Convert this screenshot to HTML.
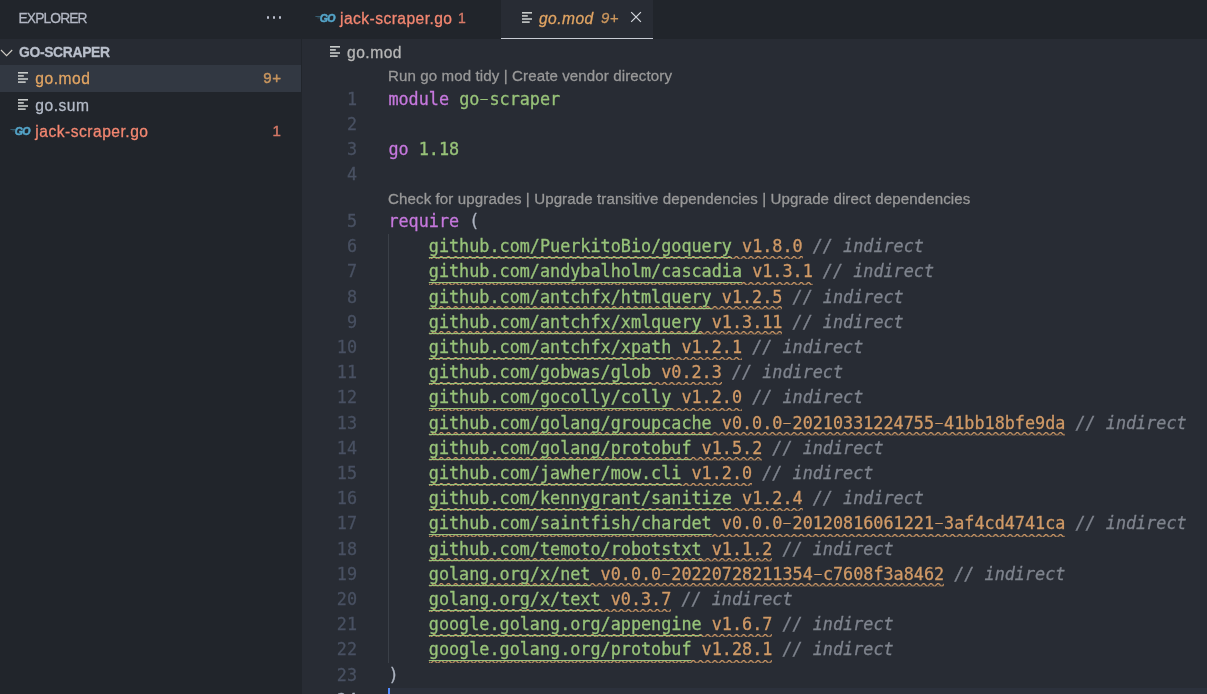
<!DOCTYPE html>
<html lang="en">
<head>
<meta charset="utf-8">
<title>go.mod — go-scraper</title>
<style>
*{box-sizing:border-box;margin:0;padding:0}
html,body{width:1207px;height:694px;overflow:hidden;background:#282c34}
body{position:relative;will-change:transform;-webkit-text-stroke:.28px;font-family:"Liberation Sans",sans-serif;color:#abb2bf;-webkit-font-smoothing:antialiased}
#side{position:absolute;left:0;top:0;width:301px;height:694px;background:#21252b}
#sep{position:absolute;left:301px;top:0;width:1px;height:694px;background:#21252b}
#side .title{position:absolute;left:18.5px;top:0;height:39px;line-height:37px;font-size:13.8px;color:#b3b8c4;letter-spacing:-.87px}
#side .dots{position:absolute;left:266px;top:0;height:39px;width:16px}
#side .dots i{position:absolute;top:16.2px;width:2.4px;height:2.4px;border-radius:50%;background:#bcc1cf}
#sect{position:absolute;left:0;top:39px;width:301px;height:26px;background:#272b33;font-weight:bold;font-size:13.9px;line-height:27.4px;color:#b9bfcb;letter-spacing:-.35px}
#sect span{position:absolute;left:19px;top:0}
#sect svg{position:absolute;left:0;top:8px}
.row{position:absolute;left:0;width:301px;height:26.5px;font-size:15.6px;line-height:28.5px;letter-spacing:.5px}
.row.sel{background:#323842}
.row .nm{position:absolute;left:35.3px;top:0}
.row .bd{position:absolute;right:19.6px;top:0;font-size:15px;letter-spacing:.5px;line-height:26.5px;opacity:.85;-webkit-text-stroke:.45px}
.ico{position:absolute}
.warn{color:#e2a563}.err{color:#f48771}
#tabs{position:absolute;left:302px;top:0;width:905px;height:39px;background:#21252b}
.tab{position:absolute;top:0;height:39px;font-size:15.6px;line-height:37px;letter-spacing:.45px}
#t1{left:0;width:198px}
#t2{left:199px;width:152px;background:#282c34;border-bottom:1px solid #c8ccd4;font-style:italic}
.tab .nm{position:absolute;top:0}
#crumb{position:absolute;left:302px;top:39px;width:905px;height:26px;font-size:15.6px;line-height:28px;color:#b7b7b7;letter-spacing:.5px}
#ed{position:absolute;left:302px;top:65px;width:905px;height:629px;overflow:hidden;font-family:"DejaVu Sans Mono","Liberation Mono",monospace;font-size:16.8px}
.ln{position:absolute;left:0;width:905px;height:25.2px;line-height:25.2px;white-space:pre}
.ln .no{position:absolute;left:0;top:0;width:55px;text-align:right;color:#495162}
.ln .cd{position:absolute;left:86.4px;top:0;height:25.2px;-webkit-text-stroke:.3px}
.ln.g:before{content:"";position:absolute;left:86px;top:0;width:1px;height:100%;background:#3b4048}
.lens{position:absolute;left:0;height:21.6px;line-height:23px;padding-left:86px;font-family:"Liberation Sans",sans-serif;font-size:15.1px;color:#999;white-space:pre;letter-spacing:.1px}
.k{color:#c678dd}.s{color:#98c379}.v{color:#d19a66}.c{color:#7f848e;font-style:italic}.p{color:#abb2bf}
.u{text-decoration:underline;text-decoration-thickness:1px;text-underline-position:under;text-underline-offset:0px}
.sq{position:relative;display:inline-block;height:25.2px;z-index:0}
.wv{position:absolute;left:0;display:block;z-index:-1}
.hy{display:inline-block;transform:translateY(-.6px) scale(1.65,.72)}
.curline .cd{background:#2c313c;width:820px;top:0}
.curline .no{color:#abb2bf}
.cur{display:inline-block;width:2px;height:25.2px;background:#528bff;vertical-align:top}
</style>
</head>
<body>
<svg width="0" height="0" style="position:absolute">
<defs>
<pattern id="wave" x="-0.6" y="0" width="7.2" height="3.6" patternUnits="userSpaceOnUse">
<g transform="scale(1.2)" fill="#d39c67"><polygon points="5.5,0 2.5,3 1.1,3 4.1,0"/><polygon points="4,0 6,2 6,0.6 5.4,0"/><polygon points="0,2 1,3 2.4,3 0,0.6"/></g>
</pattern>
</defs>
</svg>
<div id="side">
  <div class="title">EXPLORER</div>
  <div class="dots"><i style="left:.8px"></i><i style="left:6.8px"></i><i style="left:12.8px"></i></div>
  <div id="sect"><svg width="14" height="12" viewBox="0 0 14 12"><path d="M1 3 L6.6 8.7 L12.2 3" fill="none" stroke="#d2cec6" stroke-width="1.1"/></svg><span>GO-SCRAPER</span></div>
  <div class="row sel" style="top:65px">
    <svg class="ico" style="left:17px;top:6px" width="12" height="14" viewBox="0 0 12 14"><g fill="#c9cccb"><rect x="1" y="1" width="10" height="1.6"/><rect x="1" y="4.1" width="5.8" height="1.6"/><rect x="1" y="7.2" width="10" height="1.6"/><rect x="1" y="10.3" width="7.7" height="1.6"/></g></svg>
    <span class="nm warn">go.mod</span><span class="bd warn">9+</span>
  </div>
  <div class="row" style="top:91.5px">
    <svg class="ico" style="left:17px;top:6px" width="12" height="14" viewBox="0 0 12 14"><g fill="#c9cccb"><rect x="1" y="1" width="10" height="1.6"/><rect x="1" y="4.1" width="5.8" height="1.6"/><rect x="1" y="7.2" width="10" height="1.6"/><rect x="1" y="10.3" width="7.7" height="1.6"/></g></svg>
    <span class="nm" style="color:#b4bbc8">go.sum</span>
  </div>
  <div class="row" style="top:118px">
    <svg class="ico go" style="left:9px;top:8px" width="24" height="12" viewBox="0 0 24 12"><text x="5.7" y="8.9" font-family="Liberation Sans, sans-serif" font-weight="bold" font-style="italic" font-size="10.6" fill="#54a4c8" stroke="#54a4c8" stroke-width=".5" letter-spacing="-.75">GO</text><rect x="1.4" y="3.1" width="4.6" height="0.9" fill="#54a4c8" opacity=".5"/><rect x="3.4" y="4.5" width="2.6" height="0.8" fill="#54a4c8" opacity=".4"/></svg>
    <span class="nm err">jack-scraper.go</span><span class="bd err">1</span>
  </div>
</div>
<div id="sep"></div>
<div id="tabs">
  <div class="tab" id="t1">
    <svg class="ico go" style="left:11.6px;top:13px" width="24" height="12" viewBox="0 0 24 12"><text x="5.7" y="8.9" font-family="Liberation Sans, sans-serif" font-weight="bold" font-style="italic" font-size="10.6" fill="#54a4c8" stroke="#54a4c8" stroke-width=".5" letter-spacing="-.75">GO</text><rect x="1.4" y="3.1" width="4.6" height="0.9" fill="#54a4c8" opacity=".5"/><rect x="3.4" y="4.5" width="2.6" height="0.8" fill="#54a4c8" opacity=".4"/></svg>
    <span class="nm err" style="left:38px">jack-scraper.go</span><span class="nm err" style="left:156px;font-size:14px;opacity:.88">1</span>
  </div>
  <div class="tab" id="t2">
    <svg class="ico" style="left:20px;top:11px" width="12" height="14" viewBox="0 0 12 14"><g fill="#c9cccb"><rect x="1" y="1" width="10" height="1.6"/><rect x="1" y="4.1" width="5.8" height="1.6"/><rect x="1" y="7.2" width="10" height="1.6"/><rect x="1" y="10.3" width="7.7" height="1.6"/></g></svg>
    <span class="nm warn" style="left:38px">go.mod</span><span class="nm warn" style="left:100px;font-size:15px;opacity:.88;line-height:36px">9+</span>
    <svg class="ico" style="left:128.8px;top:11px" width="12" height="12" viewBox="0 0 12 12"><path d="M1.2 1.2 L10.9 10.9 M10.9 1.2 L1.2 10.9" stroke="#d7dae0" stroke-width="1.2" fill="none"/></svg>
  </div>
</div>
<div id="crumb">
  <svg class="ico" style="left:27px;top:6px" width="12" height="14" viewBox="0 0 12 14"><g fill="#c9cccb"><rect x="1" y="1" width="10" height="1.6"/><rect x="1" y="4.1" width="5.8" height="1.6"/><rect x="1" y="7.2" width="10" height="1.6"/><rect x="1" y="10.3" width="7.7" height="1.6"/></g></svg>
  <span style="position:absolute;left:45px;top:0">go.mod</span>
</div>
<div id="ed">
<div class="lens" style="top:0px;line-height:21.6px">Run go mod tidy | Create vendor directory</div>
<div class="ln" style="top:21.6px"><span class="no">1</span><span class="cd"><span class="k">module</span> <span class="s">go<span class="hy">-</span>scraper</span></span></div>
<div class="ln" style="top:46.8px"><span class="no">2</span><span class="cd"></span></div>
<div class="ln" style="top:72px"><span class="no">3</span><span class="cd"><span class="k">go</span> <span class="s">1.18</span></span></div>
<div class="ln" style="top:97.2px"><span class="no">4</span><span class="cd"></span></div>
<div class="lens" style="top:122.4px;line-height:23px">Check for upgrades | Upgrade transitive dependencies | Upgrade direct dependencies</div>
<div class="ln" style="top:144px"><span class="no">5</span><span class="cd"><span class="k">require</span> <span class="p">(</span></span></div>
<div class="ln g" style="top:169.2px"><span class="no">6</span><span class="cd"><span class="ind">    </span><span class="sq"><span class="s u">github.com/PuerkitoBio/goquery</span> <span class="v">v1.8.0</span><svg class="wv" style="top:21.6px" width="100%" height="3.1"><rect width="100%" height="3.1" fill="url(#wave)"/></svg></span> <span class="c">// indirect</span></span></div>
<div class="ln g" style="top:194.4px"><span class="no">7</span><span class="cd"><span class="ind">    </span><span class="sq"><span class="s u">github.com/andybalholm/cascadia</span> <span class="v">v1.3.1</span><svg class="wv" style="top:22.2px" width="100%" height="3.1"><rect width="100%" height="3.1" fill="url(#wave)"/></svg></span> <span class="c">// indirect</span></span></div>
<div class="ln g" style="top:219.6px"><span class="no">8</span><span class="cd"><span class="ind">    </span><span class="sq"><span class="s u">github.com/antchfx/htmlquery</span> <span class="v">v1.2.5</span><svg class="wv" style="top:21.6px" width="100%" height="3.6"><rect width="100%" height="3.6" fill="url(#wave)"/></svg></span> <span class="c">// indirect</span></span></div>
<div class="ln g" style="top:244.8px"><span class="no">9</span><span class="cd"><span class="ind">    </span><span class="sq"><span class="s u">github.com/antchfx/xmlquery</span> <span class="v">v1.3.11</span><svg class="wv" style="top:21.6px" width="100%" height="3.6"><rect width="100%" height="3.6" fill="url(#wave)"/></svg></span> <span class="c">// indirect</span></span></div>
<div class="ln g" style="top:270px"><span class="no">10</span><span class="cd"><span class="ind">    </span><span class="sq"><span class="s u">github.com/antchfx/xpath</span> <span class="v">v1.2.1</span><svg class="wv" style="top:21.6px" width="100%" height="3.6"><rect width="100%" height="3.6" fill="url(#wave)"/></svg></span> <span class="c">// indirect</span></span></div>
<div class="ln g" style="top:295.2px"><span class="no">11</span><span class="cd"><span class="ind">    </span><span class="sq"><span class="s u">github.com/gobwas/glob</span> <span class="v">v0.2.3</span><svg class="wv" style="top:21.6px" width="100%" height="3.1"><rect width="100%" height="3.1" fill="url(#wave)"/></svg></span> <span class="c">// indirect</span></span></div>
<div class="ln g" style="top:320.4px"><span class="no">12</span><span class="cd"><span class="ind">    </span><span class="sq"><span class="s u">github.com/gocolly/colly</span> <span class="v">v1.2.0</span><svg class="wv" style="top:22.2px" width="100%" height="3.1"><rect width="100%" height="3.1" fill="url(#wave)"/></svg></span> <span class="c">// indirect</span></span></div>
<div class="ln g" style="top:345.6px"><span class="no">13</span><span class="cd"><span class="ind">    </span><span class="sq"><span class="s u">github.com/golang/groupcache</span> <span class="v">v0.0.0<span class="hy">-</span>20210331224755<span class="hy">-</span>41bb18bfe9da</span><svg class="wv" style="top:21.6px" width="100%" height="3.6"><rect width="100%" height="3.6" fill="url(#wave)"/></svg></span> <span class="c">// indirect</span></span></div>
<div class="ln g" style="top:370.8px"><span class="no">14</span><span class="cd"><span class="ind">    </span><span class="sq"><span class="s u">github.com/golang/protobuf</span> <span class="v">v1.5.2</span><svg class="wv" style="top:21.6px" width="100%" height="3.6"><rect width="100%" height="3.6" fill="url(#wave)"/></svg></span> <span class="c">// indirect</span></span></div>
<div class="ln g" style="top:396px"><span class="no">15</span><span class="cd"><span class="ind">    </span><span class="sq"><span class="s u">github.com/jawher/mow.cli</span> <span class="v">v1.2.0</span><svg class="wv" style="top:21.6px" width="100%" height="3.6"><rect width="100%" height="3.6" fill="url(#wave)"/></svg></span> <span class="c">// indirect</span></span></div>
<div class="ln g" style="top:421.2px"><span class="no">16</span><span class="cd"><span class="ind">    </span><span class="sq"><span class="s u">github.com/kennygrant/sanitize</span> <span class="v">v1.2.4</span><svg class="wv" style="top:21.6px" width="100%" height="3.1"><rect width="100%" height="3.1" fill="url(#wave)"/></svg></span> <span class="c">// indirect</span></span></div>
<div class="ln g" style="top:446.4px"><span class="no">17</span><span class="cd"><span class="ind">    </span><span class="sq"><span class="s u">github.com/saintfish/chardet</span> <span class="v">v0.0.0<span class="hy">-</span>20120816061221<span class="hy">-</span>3af4cd4741ca</span><svg class="wv" style="top:22.2px" width="100%" height="3.1"><rect width="100%" height="3.1" fill="url(#wave)"/></svg></span> <span class="c">// indirect</span></span></div>
<div class="ln g" style="top:471.6px"><span class="no">18</span><span class="cd"><span class="ind">    </span><span class="sq"><span class="s u">github.com/temoto/robotstxt</span> <span class="v">v1.1.2</span><svg class="wv" style="top:21.6px" width="100%" height="3.6"><rect width="100%" height="3.6" fill="url(#wave)"/></svg></span> <span class="c">// indirect</span></span></div>
<div class="ln g" style="top:496.8px"><span class="no">19</span><span class="cd"><span class="ind">    </span><span class="sq"><span class="s u">golang.org/x/net</span> <span class="v">v0.0.0<span class="hy">-</span>20220728211354<span class="hy">-</span>c7608f3a8462</span><svg class="wv" style="top:21.6px" width="100%" height="3.6"><rect width="100%" height="3.6" fill="url(#wave)"/></svg></span> <span class="c">// indirect</span></span></div>
<div class="ln g" style="top:522px"><span class="no">20</span><span class="cd"><span class="ind">    </span><span class="sq"><span class="s u">golang.org/x/text</span> <span class="v">v0.3.7</span><svg class="wv" style="top:21.6px" width="100%" height="3.6"><rect width="100%" height="3.6" fill="url(#wave)"/></svg></span> <span class="c">// indirect</span></span></div>
<div class="ln g" style="top:547.2px"><span class="no">21</span><span class="cd"><span class="ind">    </span><span class="sq"><span class="s u">google.golang.org/appengine</span> <span class="v">v1.6.7</span><svg class="wv" style="top:21.6px" width="100%" height="3.1"><rect width="100%" height="3.1" fill="url(#wave)"/></svg></span> <span class="c">// indirect</span></span></div>
<div class="ln g" style="top:572.4px"><span class="no">22</span><span class="cd"><span class="ind">    </span><span class="sq"><span class="s u">google.golang.org/protobuf</span> <span class="v">v1.28.1</span><svg class="wv" style="top:22.2px" width="100%" height="3.1"><rect width="100%" height="3.1" fill="url(#wave)"/></svg></span> <span class="c">// indirect</span></span></div>
<div class="ln" style="top:597.6px"><span class="no">23</span><span class="cd"><span class="p">)</span></span></div>
<div class="ln curline" style="top:622.8px"><span class="no">24</span><span class="cd"><span class="cur"></span></span></div>
</div>
</body>
</html>
